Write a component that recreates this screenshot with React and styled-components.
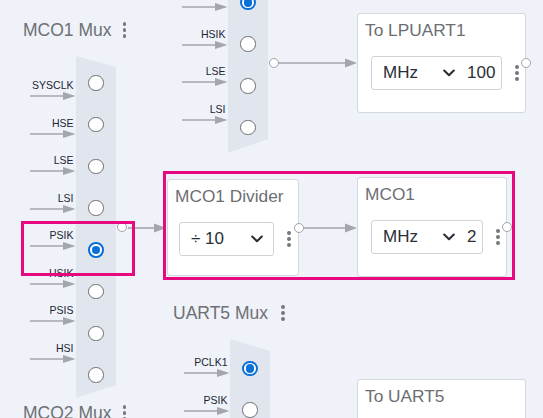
import React from 'react';
import styled, { createGlobalStyle } from 'styled-components';

const WIRE = '#a3a6ac';
const ACCENT = '#e6097f';
const RADIO_BLUE = '#0b6fd8';

const GlobalStyle = createGlobalStyle`
  *, *::before, *::after { box-sizing: border-box; }
  html, body { margin: 0; padding: 0; background: #eff2f9; }
  body { font-family: "Liberation Sans", Arial, Helvetica, sans-serif; }
`;

const Canvas = styled.div`
  position: relative;
  width: 543px;
  height: 418px;
  overflow: hidden;
  background: #eff2f9;
`;

const WireLayer = styled.svg`
  position: absolute;
  left: 0;
  top: 0;
  width: 543px;
  height: 418px;
  pointer-events: none;
`;

/* ---------- block titles ("MCO1 Mux" and friends) ---------- */

const BlockTitle = styled.div`
  position: absolute;
  left: ${p => p.$x}px;
  top: ${p => p.$y}px;
  display: flex;
  align-items: center;
  gap: ${p => p.$gap ?? 11}px;
  font-size: 17.5px;
  line-height: 20px;
  color: #6e7074;
  white-space: nowrap;
`;

const KebabWrap = styled.span`
  display: inline-flex;
  flex-direction: column;
  gap: 2.6px;
  width: 4px;
  align-items: center;
`;

const KebabDot = styled.i`
  display: block;
  width: 3.8px;
  height: 3.8px;
  border-radius: 50%;
  background: #76787c;
`;

const Kebab = () => (
  <KebabWrap>
    <KebabDot />
    <KebabDot />
    <KebabDot />
  </KebabWrap>
);

/* ---------- multiplexer nodes ---------- */

const MuxFrame = styled.div`
  position: absolute;
  left: ${p => p.$x}px;
  top: ${p => p.$y}px;
  height: ${p => p.$h}px;
  display: flex;
`;

const InputColumn = styled.div`
  width: 46px;
  display: flex;
  flex-direction: column;
  justify-content: center;
`;

const InputRow = styled.div`
  height: 37.5px;
  flex: none;
  display: flex;
  flex-direction: column;
  justify-content: flex-end;
  padding-bottom: 13.25px;
`;

const InputLabel = styled.span`
  font-size: 10.5px;
  line-height: 12px;
  color: #1c2535;
  text-align: right;
  padding-right: 2.5px;
  white-space: nowrap;
`;

const ArrowSvg = styled.svg`
  display: block;
  width: 46px;
  height: 10px;
`;

const InputArrow = () => (
  <ArrowSvg viewBox="0 0 46 10">
    <line x1="0" y1="5" x2="34" y2="5" stroke={WIRE} strokeWidth="1.6" />
    <polygon points="33,1 45.5,5 33,9" fill={WIRE} />
  </ArrowSvg>
);

const MuxBody = styled.div`
  width: 40px;
  background: #e0e5ee;
  clip-path: polygon(0 0, 100% ${p => p.$topSlant}px, 100% calc(100% - ${p => p.$bottomSlant}px), 0 100%);
  display: flex;
  flex-direction: column;
  align-items: center;
  justify-content: center;
  gap: 26.3px;
  padding-top: 4px;
`;

const Radio = styled.span`
  flex: none;
  width: 15.4px;
  height: 15.4px;
  border-radius: 50%;
  background: #fff;
  border: ${p => (p.$on ? `2px solid ${RADIO_BLUE}` : '1.3px solid #6c6e72')};
  display: flex;
  align-items: center;
  justify-content: center;

  &::after {
    content: '';
    display: ${p => (p.$on ? 'block' : 'none')};
    width: 8.6px;
    height: 8.6px;
    border-radius: 50%;
    background: ${RADIO_BLUE};
  }
`;

const Port = styled.span`
  position: absolute;
  top: 50%;
  margin-top: -5px;
  width: 10px;
  height: 10px;
  border-radius: 50%;
  background: #fff;
  border: 1.3px solid #a0a3a9;
`;

const MuxPort = styled(Port)`
  left: 87px;
`;

function Mux({ x, y, height, inputs, selected, topSlant = 12, bottomSlant = 13 }) {
  return (
    <MuxFrame $x={x} $y={y} $h={height}>
      <InputColumn>
        {inputs.map(name => (
          <InputRow key={name}>
            <InputLabel>{name}</InputLabel>
            <InputArrow />
          </InputRow>
        ))}
      </InputColumn>
      <MuxBody $topSlant={topSlant} $bottomSlant={bottomSlant}>
        {inputs.map((name, i) => (
          <Radio key={name} $on={i === selected} />
        ))}
      </MuxBody>
      <MuxPort />
    </MuxFrame>
  );
}

/* ---------- output / divider cards ---------- */

const Card = styled.div`
  position: absolute;
  left: ${p => p.$x}px;
  top: ${p => p.$y}px;
  width: ${p => p.$w}px;
  height: ${p => p.$h}px;
  background: #fff;
  border: 1px solid #d3d7de;
  border-radius: 3px;
  padding: 6px 7px 0 7px;
`;

const CardTitle = styled.div`
  font-size: 17.3px;
  line-height: 20px;
  color: #6c6e72;
  white-space: nowrap;
`;

const CardRow = styled.div`
  margin-top: 16px;
  padding-left: ${p => p.$inset}px;
  display: flex;
  align-items: center;
  gap: 13px;
`;

const ValueBox = styled.div`
  flex: 1;
  height: 34px;
  border: 1px solid #cfd3da;
  border-radius: 3px;
  background: #fff;
  display: flex;
  align-items: center;
  padding: 0 6px 0 11px;
  font-size: 17px;
  color: #2a2e36;
  white-space: nowrap;
`;

const UnitPick = styled.span`
  width: 72px;
  flex: none;
  display: flex;
  align-items: center;
  justify-content: space-between;
`;

const ValueText = styled.span`
  margin-left: 12px;
`;

const ChevronSvg = styled.svg`
  display: block;
  width: 12px;
  height: 8px;
`;

const Chevron = () => (
  <ChevronSvg viewBox="0 0 12 8">
    <polyline points="1.2,1.5 6,6.2 10.8,1.5" fill="none" stroke="#2a2e36" strokeWidth="2.1" strokeLinecap="round" strokeLinejoin="round" />
  </ChevronSvg>
);

const CardPort = styled(Port)`
  right: -6px;
`;

function ClockCard({ x, y, w, h, title, unit, value, inset = 6, port = true }) {
  return (
    <Card $x={x} $y={y} $w={w} $h={h}>
      <CardTitle>{title}</CardTitle>
      <CardRow $inset={inset}>
        <ValueBox>
          <UnitPick>
            <span>{unit}</span>
            <Chevron />
          </UnitPick>
          {value != null && <ValueText>{value}</ValueText>}
        </ValueBox>
        <Kebab />
      </CardRow>
      {port && <CardPort />}
    </Card>
  );
}

/* ---------- selection highlight ---------- */

const Highlight = styled.div`
  position: absolute;
  left: ${p => p.$x}px;
  top: ${p => p.$y}px;
  width: ${p => p.$w}px;
  height: ${p => p.$h}px;
  border: 3px solid ${ACCENT};
  pointer-events: none;
`;

function Wire({ from, to, y }) {
  return (
    <g>
      <line x1={from} y1={y} x2={to - 11} y2={y} stroke={WIRE} strokeWidth="1.6" />
      <polygon points={`${to - 12},${y - 4.6} ${to},${y} ${to - 12},${y + 4.6}`} fill={WIRE} />
    </g>
  );
}

export default function App() {
  return (
    <>
      <GlobalStyle />
      <Canvas>
        <WireLayer viewBox="0 0 543 418">
          <Wire from={279} to={357} y={63} />
          <Wire from={128} to={166} y={228} />
          <Wire from={303} to={357} y={228} />
        </WireLayer>

        <Mux
          x={182}
          y={-27}
          height={180}
          topSlant={11}
          bottomSlant={14}
          inputs={['PCLK4', 'HSIK', 'LSE', 'LSI']}
          selected={0}
        />
        <ClockCard x={357} y={13} w={169} h={100} title="To LPUART1" unit="MHz" value="100" />

        <BlockTitle $x={23} $y={20}>
          <span>MCO1 Mux</span>
          <Kebab />
        </BlockTitle>
        <Mux
          x={30}
          y={56}
          height={342}
          topSlant={11}
          bottomSlant={13}
          inputs={['SYSCLK', 'HSE', 'LSE', 'LSI', 'PSIK', 'HSIK', 'PSIS', 'HSI']}
          selected={4}
        />

        <ClockCard x={167} y={179} w={132} h={97} title="MCO1 Divider" unit="÷ 10" inset={4} />
        <ClockCard x={357} y={177} w={150} h={100} title="MCO1" unit="MHz" value="2" />

        <BlockTitle $x={173} $y={303} $gap={13}>
          <span>UART5 Mux</span>
          <Kebab />
        </BlockTitle>
        <Mux
          x={184}
          y={339}
          height={180}
          topSlant={12}
          bottomSlant={13}
          inputs={['PCLK1', 'PSIK', 'HSIK', 'LSE']}
          selected={0}
        />
        <ClockCard x={357} y={379} w={169} h={100} title="To UART5" unit="MHz" value="100" />

        <BlockTitle $x={23} $y={403}>
          <span>MCO2 Mux</span>
          <Kebab />
        </BlockTitle>

        <Highlight $x={21} $y={221} $w={114} $h={55} />
        <Highlight $x={163} $y={171} $w={352} $h={109} />
      </Canvas>
    </>
  );
}
